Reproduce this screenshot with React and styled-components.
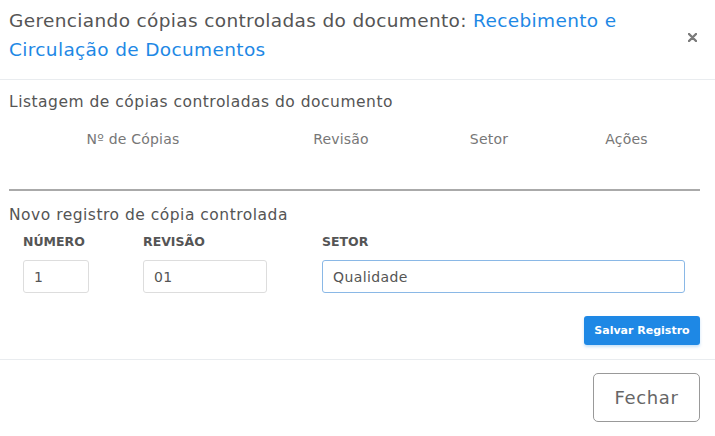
import React from 'react';
import styled, { createGlobalStyle } from 'styled-components';

const GlobalStyle = createGlobalStyle`
  html, body {
    margin: 0;
    padding: 0;
    background: #fff;
  }
  body {
    font-family: 'DejaVu Sans', 'Noto Sans', sans-serif;
    color: #555;
  }
`;

const App = () => {
  return (
    <Modal>
      <GlobalStyle />
      <Header>
        <Title>
          Gerenciando cópias controladas do documento: <Link>Recebimento e</Link>
          <br />
          <Link>Circulação de Documentos</Link>
        </Title>
        <Close aria-label="close">
          <svg width="9" height="9" viewBox="0 0 9 9">
            <path d="M1 1 L8 8 M8 1 L1 8" stroke="#7a7a7a" strokeWidth="2.4" strokeLinecap="round" />
          </svg>
        </Close>
      </Header>
      <Body>
        <SectionTitle>Listagem de cópias controladas do documento</SectionTitle>
        <TableHead>
          <Th>Nº de Cópias</Th>
          <Th>Revisão</Th>
          <Th>Setor</Th>
          <Th>Ações</Th>
        </TableHead>
        <SectionTitle>Novo registro de cópia controlada</SectionTitle>
        <FormRow>
          <Field>
            <Label>Número</Label>
            <Input defaultValue="1" />
          </Field>
          <Field>
            <Label>Revisão</Label>
            <Input defaultValue="01" />
          </Field>
          <Field>
            <Label>Setor</Label>
            <Input defaultValue="Qualidade" $focused />
          </Field>
        </FormRow>
        <Actions>
          <SaveButton>Salvar Registro</SaveButton>
        </Actions>
      </Body>
      <Footer>
        <CloseButton>Fechar</CloseButton>
      </Footer>
    </Modal>
  );
};

const Modal = styled.div`
  width: 715px;
  min-height: 436px;
  background: #fff;
`;

const Header = styled.div`
  display: flex;
  align-items: center;
  justify-content: space-between;
  padding: 6px 18px 15px 9px;
  border-bottom: 1px solid #e9ecef;
`;

const Title = styled.h4`
  margin: 0;
  font-size: 18.5px;
  font-weight: 400;
  line-height: 29px;
  color: #555;
  letter-spacing: 0.35px;
`;

const Link = styled.span`
  color: #1e88e5;
`;

const Close = styled.span`
  display: flex;
  margin-top: 4px;
`;

const Body = styled.div`
  padding: 11px 15px 14px 9px;
`;

const SectionTitle = styled.div`
  font-size: 15.5px;
  line-height: 22px;
  letter-spacing: 0.5px;
  color: #555;
`;

const TableHead = styled.div`
  display: grid;
  grid-template-columns: 248px 168px 128px 1fr;
  width: 691px;
  height: 76px;
  margin-bottom: 13px;
  border-bottom: 2px solid #aaa;
`;

const Th = styled.div`
  text-align: center;
  font-size: 14px;
  letter-spacing: 0.2px;
  color: #777;
  padding-top: 18px;
`;

const FormRow = styled.div`
  display: grid;
  grid-template-columns: 66px 124px 364px;
  column-gap: 54px;
  padding-left: 14px;
  margin-top: 6px;
`;

const Field = styled.div`
  display: flex;
  flex-direction: column;
  &:nth-child(3) {
    margin-left: 1px;
  }
`;

const Label = styled.label`
  font-size: 12.5px;
  font-weight: 700;
  text-transform: uppercase;
  color: #555;
  line-height: 20px;
  margin-bottom: 8px;
`;

const Input = styled.input`
  box-sizing: border-box;
  height: 33px;
  width: 100%;
  padding: 0 10px;
  font-family: inherit;
  font-size: 14px;
  letter-spacing: 0.4px;
  color: #555;
  border-radius: 3px;
  outline: none;
  border: 1px solid ${(props) => (props.$focused ? '#8ab8e6' : '#ddd')};
`;

const Actions = styled.div`
  display: flex;
  justify-content: flex-end;
  margin-top: 23px;
`;

const SaveButton = styled.button`
  font-family: inherit;
  font-size: 11px;
  font-weight: 700;
  color: #fff;
  background: #1e88e5;
  border: none;
  border-radius: 3px;
  height: 29px;
  width: 116px;
  padding: 0;
  box-shadow: 0 2px 3px rgba(30, 136, 229, 0.25);
`;

const Footer = styled.div`
  display: flex;
  justify-content: flex-end;
  padding: 13px 15px 13px;
  border-top: 1px solid #e9ecef;
`;

const CloseButton = styled.button`
  font-family: inherit;
  font-size: 18px;
  letter-spacing: 0.6px;
  color: #666;
  background: #fff;
  border: 1px solid #999;
  border-radius: 5px;
  width: 107px;
  height: 49px;
`;

export default App;
